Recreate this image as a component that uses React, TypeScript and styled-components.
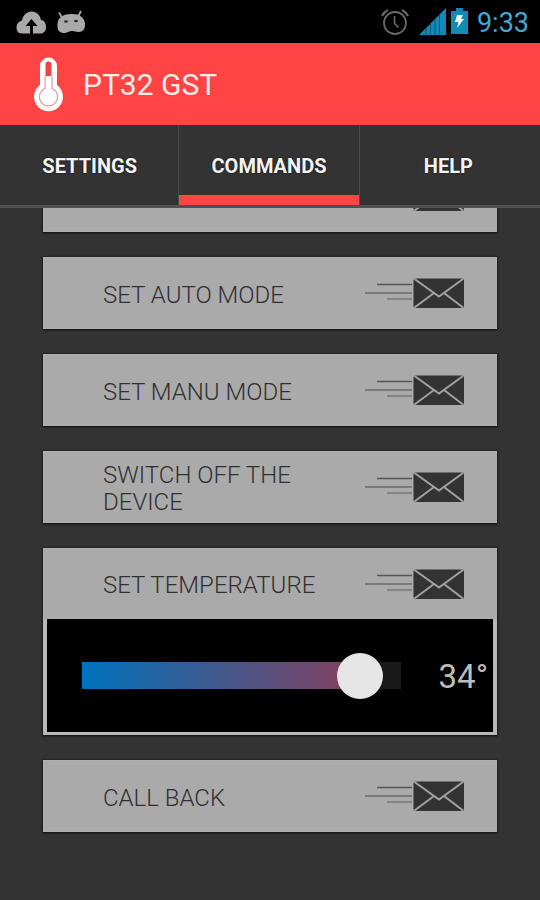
import React, { useState } from "react";
import styled, { createGlobalStyle } from "styled-components";

const GlobalStyle = createGlobalStyle`
  *, *::before, *::after { box-sizing: border-box; }
  body {
    margin: 0;
    background: #333333;
    font-family: Roboto, "Liberation Sans", sans-serif;
  }
  button { font-family: inherit; }
`;

const Screen = styled.div`
  display: flex;
  flex-direction: column;
  min-height: 100vh;
  background: #333333;
`;

const StatusBar = styled.div`
  display: flex;
  align-items: center;
  justify-content: space-between;
  height: 43px;
  padding: 0 11px 0 16px;
  background: #000000;
`;

const StatusGroup = styled.div<{ $gap: number }>`
  display: flex;
  align-items: center;
  gap: ${(p) => p.$gap}px;
`;

const Clock = styled.time`
  padding-top: 2px;
  font-size: 27px;
  line-height: 32px;
  color: #42a9d6;
`;

const Header = styled.header`
  display: flex;
  align-items: center;
  gap: 19px;
  height: 82px;
  padding: 0 32px;
  background: #ff4444;
`;

const Title = styled.h1`
  margin: 0;
  padding-top: 2px;
  font-size: 30px;
  line-height: 40px;
  font-weight: 400;
  color: #ffecec;
`;

const Tabs = styled.nav`
  display: grid;
  grid-template-columns: repeat(3, 1fr);
  height: 83px;
  padding-right: 2px;
  border-bottom: 3px solid #505050;
`;

const Tab = styled.button<{ $active?: boolean }>`
  padding: 12px 0 0;
  border: 0;
  border-bottom: 10px solid ${(p) => (p.$active ? "#ff4444" : "transparent")};
  background: #333333;
  box-shadow: ${(p) => (p.$active ? "-1px 0 #4c4c4c, 1px 0 #4c4c4c" : "none")};
  z-index: ${(p) => (p.$active ? 1 : 0)};
  color: #f4f4f4;
  font-size: 20px;
  line-height: 24px;
  font-weight: 700;
  text-shadow: 0 0 2px #111111;
  cursor: pointer;
`;

const List = styled.main`
  flex: 1;
  padding: 0 43px 68px;
  overflow: hidden;
`;

const Scrolled = styled.div`
  display: flex;
  flex-direction: column;
  gap: 25px;
  margin-top: -48px;
`;

const Card = styled.section`
  background: #aaaaaa;
  box-shadow: 0 1px 2px #111111, 0 0 2px #111111, inset 0 0 1px 1px #b0b0b0;
`;

const Command = styled.button<{ $short?: boolean }>`
  display: flex;
  align-items: center;
  justify-content: space-between;
  gap: 16px;
  width: 100%;
  height: ${(p) => (p.$short ? 71 : 72)}px;
  padding: 0 32px 0 60px;
  border: 0;
  background: transparent;
  color: #303030;
  text-align: left;
  cursor: pointer;
`;

const Label = styled.span`
  max-width: 240px;
  padding-top: 4px;
  font-size: 24px;
  line-height: 27px;
  font-weight: 300;
`;

const MailIcon = styled.svg`
  flex: none;
  width: 100px;
  height: 32px;
`;

const Panel = styled.div`
  display: flex;
  align-items: center;
  gap: 38px;
  height: 116px;
  padding: 0 5px 0 35px;
  border: solid #b8b8b8;
  border-width: 0 4px 3px;
  background: #000000;
`;

const Range = styled.input<{ $fill: number }>`
  flex: 1;
  min-width: 0;
  height: 46px;
  margin: 0;
  appearance: none;
  background: transparent;
  cursor: pointer;

  &::-webkit-slider-runnable-track {
    height: 27px;
    background:
      linear-gradient(90deg, transparent ${(p) => p.$fill}%, #191919 ${(p) => p.$fill}%),
      linear-gradient(90deg, #0072bc, #99364e);
  }
  &::-webkit-slider-thumb {
    appearance: none;
    width: 46px;
    height: 46px;
    margin-top: -9px;
    border-radius: 50%;
    background: #e6e6e6;
  }
`;

const Degrees = styled.output`
  padding-top: 2px;
  font-size: 33px;
  line-height: 40px;
  color: #bebebe;
`;

function SendMail() {
  return (
    <MailIcon viewBox="0 0 100 32" aria-hidden="true">
      <path d="M12 7.5H47" stroke="#555" strokeWidth="1.6" />
      <path d="M0 16H47" stroke="#7a7a7a" strokeWidth="2" />
      <path d="M22 22H47" stroke="#858585" strokeWidth="2.2" />
      <rect x="48.5" y="1.5" width="50.5" height="29.5" rx="2" fill="#333" />
      <path
        d="M49.5 2L74 19.5L98 2M49.5 30.5L69 16M98 30.5L79 16"
        fill="none"
        stroke="#a2a2a2"
        strokeWidth="2"
      />
    </MailIcon>
  );
}

function CloudUpload() {
  return (
    <svg width="31" height="24" viewBox="0 0 31 24" aria-hidden="true">
      <path
        d="M6 23.5C2 23.5.5 20.500.5 17.500.5 14 2.500 11.500 6 10.500 7 5 11 1.500 15.500 1.500c5 0 8.500 3.500 9.500 8.500 3.500.5 5 3.500 5 7 0 4-2 6.500-6 6.500z"
        fill="#a9a9a9"
      />
      <path d="M15.500 9l6 7h-4.500v8h-3v-8H9.500z" fill="#000" />
    </svg>
  );
}

function AndroidFace() {
  return (
    <svg width="31" height="24" viewBox="0 0 31 24" aria-hidden="true">
      <path d="M3 2.500l3.500 6M25 1l-3 6" stroke="#a9a9a9" strokeWidth="1.800" />
      <path
        d="M1.500 14C2 7 8 4 15 4c8-.5 13 3 14 9 .5 6-2 9-6.500 9-3 0-4-1.200-7-1-3 .2-4 2-8 2C3 23 1 19 1.500 14z"
        fill="#a9a9a9"
      />
      <ellipse cx="10" cy="11.500" rx="2" ry="1.300" fill="#333" />
      <ellipse cx="20" cy="11" rx="2" ry="1.300" fill="#333" />
    </svg>
  );
}

function AlarmIcon() {
  return (
    <svg width="30" height="28" viewBox="0 0 30 28" fill="none" stroke="#686868" aria-hidden="true">
      <circle cx="15" cy="15" r="11" strokeWidth="1.800" />
      <path d="M14.500 8v7.500l4 4" strokeWidth="1.700" />
      <path d="M2 8Q4 4 8 2M22 2q4 2 6 6" strokeWidth="2" />
    </svg>
  );
}

function SignalIcon() {
  return (
    <svg width="27" height="28" viewBox="0 0 27 28" aria-hidden="true">
      <path d="M0 27L27 0V27z" fill="#118bb5" />
      <path d="M7 20v7M11.500 16v11M16 11v16M20.500 7v20" stroke="#07546e" strokeWidth="1" />
    </svg>
  );
}

function BatteryIcon() {
  return (
    <svg width="17" height="27" viewBox="0 0 17 27" aria-hidden="true">
      <path d="M5 0h7v3h5v23H0V3h5z" fill="#118bb5" />
      <path d="M6 7h6l-2 4h3L6 20l1.500-6H4z" fill="#fff" />
    </svg>
  );
}

function Thermometer() {
  return (
    <svg width="32" height="56" viewBox="0 0 32 56" aria-hidden="true">
      <path
        d="M8 29V10a8.500 8.500 0 0 1 17 0v19a14.500 14.500 0 1 1-17 0z"
        fill="#fff"
      />
      <path d="M13.500 20V8.500a3 3 0 0 1 6 0V20z" fill="#f04444" />
      <path
        d="M13 20v12.500a9 9 0 1 0 7 0V20"
        fill="none"
        stroke="#e89a9a"
        strokeWidth="1.200"
      />
    </svg>
  );
}

const TABS = ["SETTINGS", "COMMANDS", "HELP"];
const COMMANDS = ["SET AUTO MODE", "SET MANU MODE", "SWITCH OFF THE DEVICE"];

const MIN_TEMP = 5;
const MAX_TEMP = 36;

export default function App() {
  const [tab, setTab] = useState("COMMANDS");
  const [temp, setTemp] = useState(34);
  const fill = 8 + ((temp - MIN_TEMP) / (MAX_TEMP - MIN_TEMP)) * 84;

  return (
    <Screen>
      <GlobalStyle />
      <StatusBar>
        <StatusGroup $gap={9}>
          <CloudUpload />
          <AndroidFace />
        </StatusGroup>
        <StatusGroup $gap={9}>
          <AlarmIcon />
          <StatusGroup $gap={5}>
            <SignalIcon />
            <BatteryIcon />
          </StatusGroup>
          <Clock>9:33</Clock>
        </StatusGroup>
      </StatusBar>
      <Header>
        <Thermometer />
        <Title>PT32 GST</Title>
      </Header>
      <Tabs>
        {TABS.map((name) => (
          <Tab key={name} $active={name === tab} onClick={() => setTab(name)}>
            {name}
          </Tab>
        ))}
      </Tabs>
      <List>
        <Scrolled>
          <Card>
            <Command aria-label="Send command">
              <Label />
              <SendMail />
            </Command>
          </Card>
          {COMMANDS.map((name) => (
            <Card key={name}>
              <Command>
                <Label>{name}</Label>
                <SendMail />
              </Command>
            </Card>
          ))}
          <Card>
            <Command $short>
              <Label id="temperature-label">SET TEMPERATURE</Label>
              <SendMail />
            </Command>
            <Panel>
              <Range
                id="temperature"
                type="range"
                aria-labelledby="temperature-label"
                min={MIN_TEMP}
                max={MAX_TEMP}
                value={temp}
                $fill={fill}
                onChange={(e) => setTemp(Number(e.target.value))}
              />
              <Degrees htmlFor="temperature">{temp}°</Degrees>
            </Panel>
          </Card>
          <Card>
            <Command>
              <Label>CALL BACK</Label>
              <SendMail />
            </Command>
          </Card>
        </Scrolled>
      </List>
    </Screen>
  );
}
